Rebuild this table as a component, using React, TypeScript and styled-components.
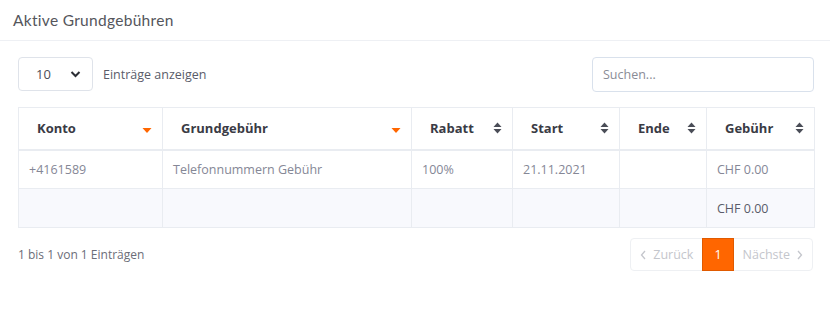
import React from "react";
import styled, { createGlobalStyle } from "styled-components";

const Global = createGlobalStyle`
  html, body { margin: 0; padding: 0; background: #fff; }
  body { font-family: "Open Sans", "Noto Sans", sans-serif; color: #6e707e; }
  * { box-sizing: border-box; }
`;

const Card = styled.div`
  width: 830px;
  background: #fff;
`;

const CardHeader = styled.div`
  height: 41px;
  padding: 0 13px;
  display: flex;
  align-items: center;
  border-bottom: 1px solid #eef0f4;
  font-family: "Lato", "Open Sans", sans-serif;
  font-size: 15.5px;
  color: #55565c;
  letter-spacing: 0.3px;
`;

const Body = styled.div`
  padding: 15px 16px 0 18px;
`;

const TopBar = styled.div`
  display: flex;
  justify-content: space-between;
  align-items: center;
  height: 36px;
`;

const LengthGroup = styled.label`
  display: flex;
  align-items: center;
  gap: 10px;
  font-size: 12.5px;
  color: #5a5c69;
`;

const SelectBox = styled.div`
  width: 75px;
  height: 34px;
  border: 1px solid #dfe3ea;
  border-radius: 4px;
  display: flex;
  align-items: center;
  justify-content: space-between;
  padding: 0 11px 0 17px;
  font-size: 13px;
  color: #4b4d57;
`;

const SearchInput = styled.div`
  width: 222px;
  height: 35px;
  border: 1px solid #d9e1ec;
  border-radius: 4px;
  display: flex;
  align-items: center;
  padding: 0 10px;
  font-size: 12.5px;
  color: #8a8c96;
`;

const Table = styled.table`
  margin-top: 15px;
  width: 796px;
  border-collapse: collapse;
  table-layout: fixed;
  font-size: 12.5px;
`;

const Th = styled.th<{ $w: number }>`
  width: ${(p) => p.$w}px;
  height: 42px;
  padding: 0 10px 0 18px;
  text-align: left;
  font-weight: 700;
  font-size: 13px;
  color: #3a3b45;
  border: 1px solid #e9ecf1;
  border-bottom: 2px solid #e9ecf1;
`;

const ThInner = styled.div`
  display: flex;
  align-items: center;
  justify-content: space-between;
`;

const Td = styled.td<{ $foot?: boolean }>`
  height: 39px;
  padding: 0 10px;
  border: 1px solid #e9ecf1;
  color: ${(p) => (p.$foot ? "#5a5c69" : "#858796")};
  background: ${(p) => (p.$foot ? "#f8f9fd" : "#fff")};
  white-space: nowrap;
`;

const BottomBar = styled.div`
  display: flex;
  justify-content: space-between;
  align-items: center;
  margin-top: 10px;
`;

const Info = styled.div`
  font-size: 12px;
  color: #6b6d78;
`;

const Pager = styled.div`
  display: flex;
  height: 33px;
  border: 1px solid #eef0f3;
  border-radius: 4px;
  margin-right: 1px;
`;

const PageItem = styled.div<{ $active?: boolean }>`
  display: flex;
  align-items: center;
  gap: 6px;
  padding: 0 ${(p) => (p.$active ? "11px" : "9px")};
  font-size: 12.5px;
  color: ${(p) => (p.$active ? "#fff" : "#c4c6cc")};
  background: ${(p) => (p.$active ? "#ff6600" : "transparent")};
  border: ${(p) => (p.$active ? "1px solid #e05a00" : "none")};
  margin: ${(p) => (p.$active ? "-1px 0" : "0")};
`;

const SortBoth = () => (
  <svg width="9" height="12" viewBox="0 0 9 12">
    <path d="M4.5 0.5 L8.5 5 H0.5 Z" fill="#4a4d57" />
    <path d="M4.5 11.5 L8.5 7 H0.5 Z" fill="#4a4d57" />
  </svg>
);

const SortDesc = () => (
  <svg width="10" height="12" viewBox="0 0 10 12">
    <path d="M0.5 6 H9.5 L5 11 Z" fill="#ff6600" />
  </svg>
);

const Chevron = () => (
  <svg width="11" height="8" viewBox="0 0 11 8">
    <path d="M1.5 2 L5.5 6 L9.5 2" stroke="#2c2e35" strokeWidth="2" fill="none" />
  </svg>
);

const Arrow = ({ dir }: { dir: "l" | "r" }) => (
  <svg width="7" height="10" viewBox="0 0 7 10">
    <path
      d={dir === "l" ? "M5 1 L1.5 5 L5 9" : "M2 1 L5.5 5 L2 9"}
      stroke="#c4c6cc"
      strokeWidth="1.3"
      fill="none"
    />
  </svg>
);

const cols: { label: string; w: number; sort: "desc" | "both" }[] = [
  { label: "Konto", w: 144, sort: "desc" },
  { label: "Grundgebühr", w: 249, sort: "desc" },
  { label: "Rabatt", w: 101, sort: "both" },
  { label: "Start", w: 107, sort: "both" },
  { label: "Ende", w: 87, sort: "both" },
  { label: "Gebühr", w: 108, sort: "both" },
];

export default function App() {
  return (
    <>
      <Global />
      <Card>
        <CardHeader>Aktive Grundgebühren</CardHeader>
        <Body>
          <TopBar>
            <LengthGroup>
              <SelectBox>
                10 <Chevron />
              </SelectBox>
              Einträge anzeigen
            </LengthGroup>
            <SearchInput>Suchen...</SearchInput>
          </TopBar>
          <Table>
            <thead>
              <tr>
                {cols.map((c) => (
                  <Th key={c.label} $w={c.w}>
                    <ThInner>
                      <span>{c.label}</span>
                      {c.sort === "desc" ? <SortDesc /> : <SortBoth />}
                    </ThInner>
                  </Th>
                ))}
              </tr>
            </thead>
            <tbody>
              <tr>
                <Td>+4161589</Td>
                <Td>Telefonnummern Gebühr</Td>
                <Td>100%</Td>
                <Td>21.11.2021</Td>
                <Td></Td>
                <Td>CHF 0.00</Td>
              </tr>
            </tbody>
            <tfoot>
              <tr>
                <Td $foot></Td>
                <Td $foot></Td>
                <Td $foot></Td>
                <Td $foot></Td>
                <Td $foot></Td>
                <Td $foot>CHF 0.00</Td>
              </tr>
            </tfoot>
          </Table>
          <BottomBar>
            <Info>1 bis 1 von 1 Einträgen</Info>
            <Pager>
              <PageItem>
                <Arrow dir="l" /> Zurück
              </PageItem>
              <PageItem $active>1</PageItem>
              <PageItem>
                Nächste <Arrow dir="r" />
              </PageItem>
            </Pager>
          </BottomBar>
        </Body>
      </Card>
    </>
  );
}
